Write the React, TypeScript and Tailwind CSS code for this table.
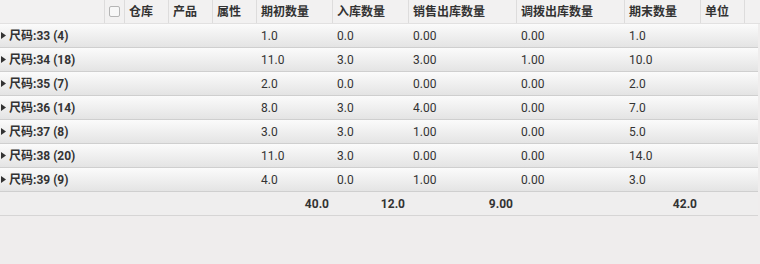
const cols = 'grid grid-cols-[105px_20px_44px_44px_44px_76px_76px_108px_108px_76px_44px_1fr]'

const headers = ['仓库', '产品', '属性', '期初数量', '入库数量', '销售出库数量', '调拨出库数量', '期末数量', '单位']

const rows = [
  { label: '尺码:33 (4)', values: ['1.0', '0.0', '0.00', '0.00', '1.0'] },
  { label: '尺码:34 (18)', values: ['11.0', '3.0', '3.00', '1.00', '10.0'] },
  { label: '尺码:35 (7)', values: ['2.0', '0.0', '0.00', '0.00', '2.0'] },
  { label: '尺码:36 (14)', values: ['8.0', '3.0', '4.00', '0.00', '7.0'] },
  { label: '尺码:37 (8)', values: ['3.0', '3.0', '1.00', '0.00', '5.0'] },
  { label: '尺码:38 (20)', values: ['11.0', '3.0', '0.00', '0.00', '14.0'] },
  { label: '尺码:39 (9)', values: ['4.0', '0.0', '1.00', '0.00', '3.0'] },
]

const totals = ['40.0', '12.0', '9.00', '', '42.0']

export default function App() {
  return (
    <div
      className="h-[264px] w-[760px] overflow-hidden bg-[#efeded] text-[12px] text-[#333]"
      style={{ fontFamily: 'Roboto, "Noto Sans CJK SC", sans-serif' }}
    >
      <div className={`${cols} h-[24px] border-b border-[#e2e1e1] bg-[#f2f1f1] font-bold`}>
        <div className="border-r border-[#dddcdc]" />
        <div className="flex items-center justify-center border-r border-[#dddcdc]">
          <span className="h-[11px] w-[11px] rounded-[2px] border border-[#b5b5b5] bg-[#f7f7f7]" />
        </div>
        {headers.map((h) => (
          <div key={h} className="flex items-center border-r border-[#dddcdc] pl-[4px]">
            {h}
          </div>
        ))}
        <div />
      </div>

      <div className="w-[758px]">
        {rows.map((r) => (
          <div
            key={r.label}
            className={`${cols} h-[24px] border-b border-[#cfcfcf] bg-gradient-to-b from-[#fbfbfb] to-[#e4e4e4]`}
          >
            <div className="col-span-5 flex items-center gap-[3px] pl-[1px] font-bold">
              <svg width="5" height="7" viewBox="0 0 5 7">
                <path d="M0 0 L5 3.5 L0 7 Z" fill="#333" />
              </svg>
              {r.label}
            </div>
            {r.values.map((v, i) => (
              <div key={i} className="flex items-center pl-[4px]">
                {v}
              </div>
            ))}
            <div />
            <div />
          </div>
        ))}

        <div className={`${cols} h-[24px] border-b border-[#d6d5d5] bg-[#efeeee] font-bold`}>
          <div className="col-span-5" />
          {totals.map((t, i) => (
            <div key={i} className="flex items-center justify-end pr-[4px]">
              {t}
            </div>
          ))}
          <div />
          <div />
        </div>
      </div>
    </div>
  )
}
